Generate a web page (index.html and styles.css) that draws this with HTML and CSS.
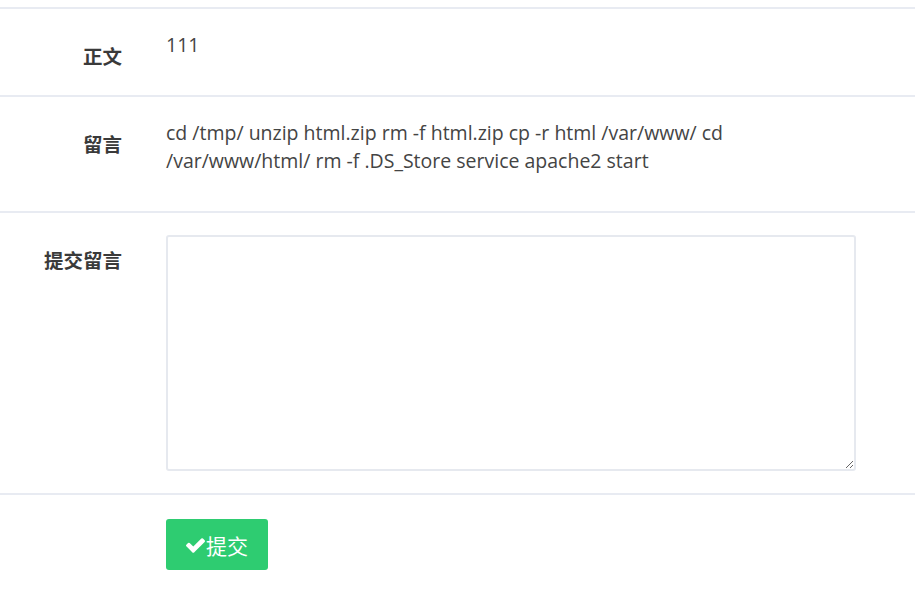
FILE: index.html
```html
<!DOCTYPE html>
<html lang="zh-CN">
<head>
<meta charset="utf-8">
<title>留言</title>
<link rel="stylesheet" href="styles.css">
</head>
<body>
<div class="top-spacer"></div>
<form class="form">
  <div class="row">
    <div class="label">正文</div>
    <div class="field"><p class="value">111</p></div>
  </div>
  <div class="row">
    <div class="label">留言</div>
    <div class="field"><p class="value">cd /tmp/ unzip html.zip rm -f html.zip cp -r html /var/www/ cd /var/www/html/ rm -f .DS_Store service apache2 start</p></div>
  </div>
  <div class="row">
    <div class="label">提交留言</div>
    <div class="field"><textarea class="textarea"></textarea></div>
  </div>
  <div class="row row-last">
    <div class="label"></div>
    <div class="field">
      <button type="button" class="btn"><svg class="check" viewBox="121 334 1550 1188" aria-hidden="true"><path d="M1671 566q0 40-28 68l-724 724-136 136q-28 28-68 28t-68-28l-136-136-362-362q-28-28-28-68t28-68l136-136q28-28 68-28t68 28l294 295 656-657q28-28 68-28t68 28l136 136q28 28 28 68z" fill="#fff"/></svg>提交</button>
    </div>
  </div>
</form>
</body>
</html>
```
FILE: styles.css
```css
html, body {
  margin: 0;
  padding: 0;
  background: #fff;
}
body {
  font-family: "Open Sans", "Noto Sans CJK SC", sans-serif;
  color: #444;
  overflow: hidden;
}
.top-spacer {
  height: 7px;
}
.form {
  border-top: 2px solid #e8ebf2;
}
.row {
  display: flex;
  gap: 44px;
  padding: 22px 0 22px;
  border-bottom: 2px solid #e8ebf2;
}
.row-last {
  border-bottom: none;
  padding-top: 24px;
}
.label {
  width: 122px;
  flex: none;
  text-align: right;
  font-family: "Noto Sans CJK SC", sans-serif;
  font-weight: 700;
  font-size: 19.5px;
  line-height: 28px;
  color: #3a3a3a;
  margin-top: 11px;
}
.field {
  flex: 1;
  min-width: 0;
}
.value {
  margin: 0 0 14px;
  font-size: 19.5px;
  line-height: 28px;
  max-width: 600px;
  color: #444;
}
.textarea {
  display: block;
  box-sizing: border-box;
  width: 690px;
  height: 236px;
  border: 2px solid #e6e9ef;
  border-radius: 3px;
  margin: 0;
  padding: 8px;
  resize: vertical;
  font-family: "Open Sans", sans-serif;
  font-size: 18px;
  background: #fff;
}
.btn {
  display: flex;
  align-items: center;
  box-sizing: border-box;
  height: 51px;
  width: 102px;
  padding: 0 0 0 20px;
  border: none;
  border-radius: 3px;
  background: #2ecc71;
  color: #fff;
  font-family: "Noto Sans CJK SC", sans-serif;
  font-weight: 400;
  font-size: 21px;
  line-height: 26px;
  cursor: pointer;
}
.check {
  width: 19px;
  height: 15px;
  margin-right: 1px;
  margin-top: 1px;
}
```
